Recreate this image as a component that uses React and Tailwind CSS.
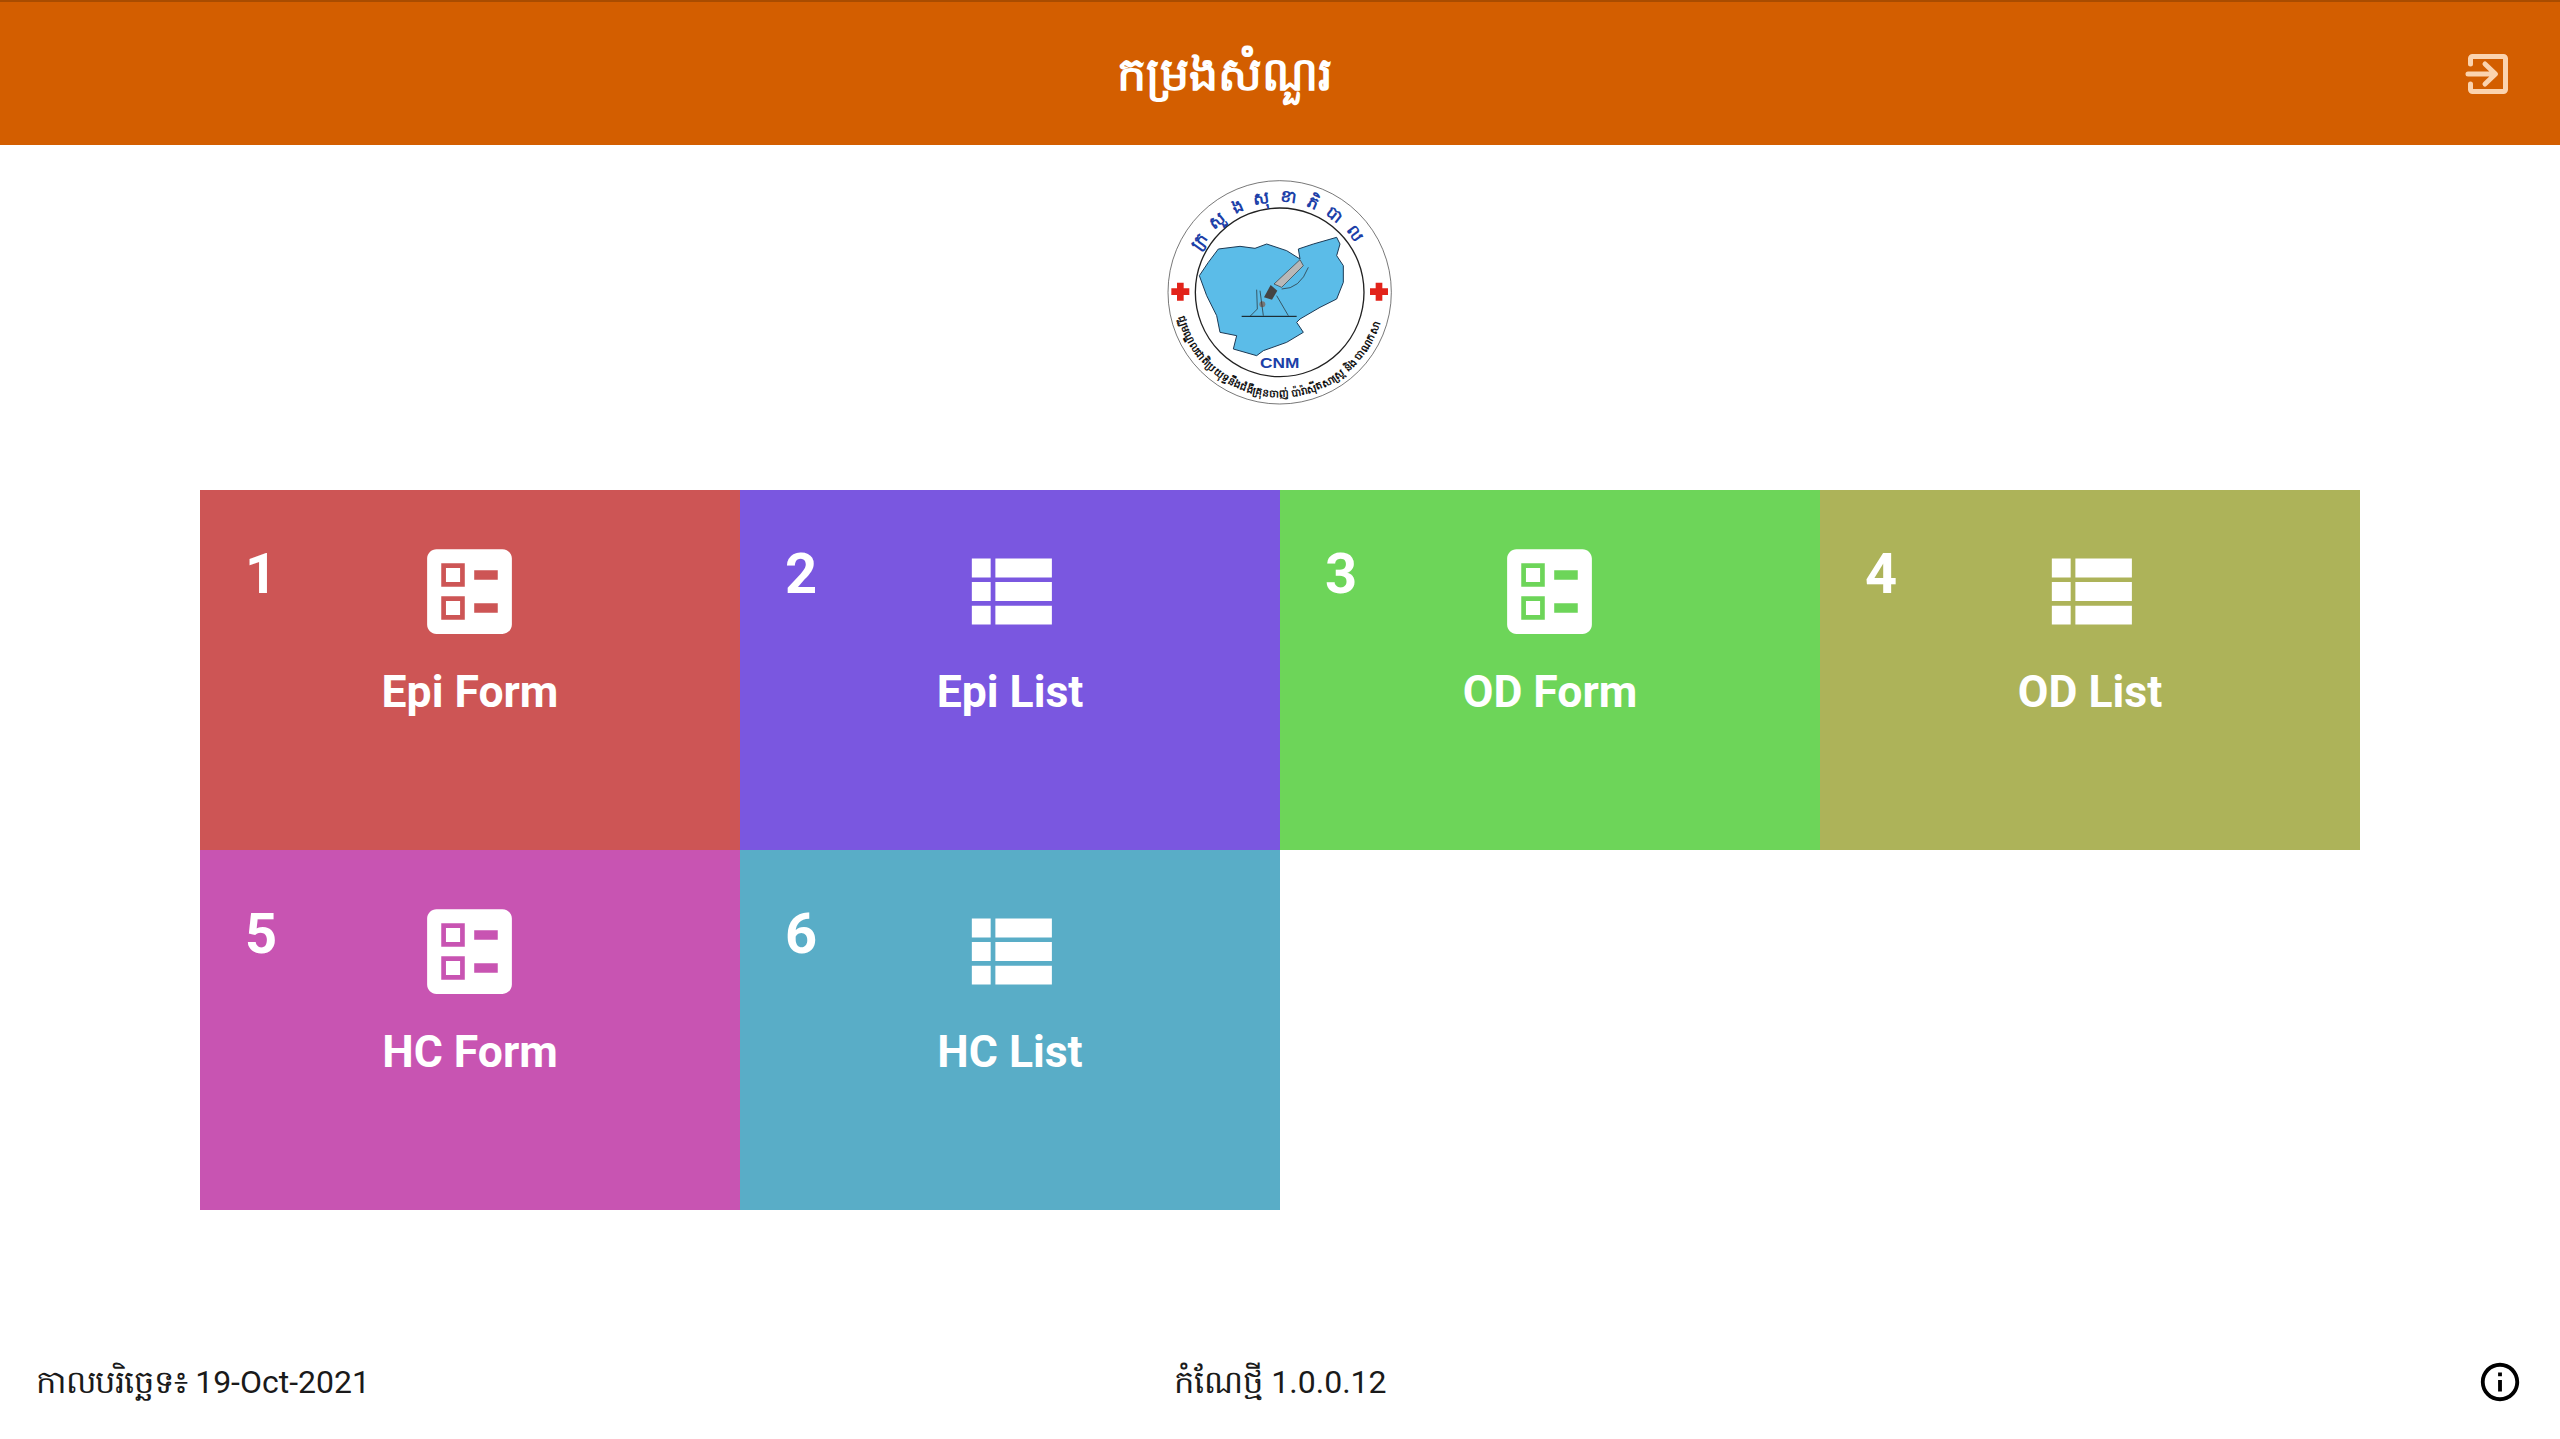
const cards = [
  { n: 1, label: "Epi Form", icon: "form", bg: "bg-[#cd5555]" },
  { n: 2, label: "Epi List", icon: "list", bg: "bg-[#7a57e0]" },
  { n: 3, label: "OD Form", icon: "form", bg: "bg-[#6dd559]" },
  { n: 4, label: "OD List", icon: "list", bg: "bg-[#adb359]" },
  { n: 5, label: "HC Form", icon: "form", bg: "bg-[#c854b2]" },
  { n: 6, label: "HC List", icon: "list", bg: "bg-[#59adc7]" },
];

function FormIcon() {
  return (
    <svg viewBox="0 0 24 24" className="w-[113px] h-[113px] -translate-x-[1px]" fill="#fff">
      <path fillRule="evenodd" d="M13 9.5h5v-2h-5v2zm0 7h5v-2h-5v2zm6 4.5H5c-1.1 0-2-.9-2-2V5c0-1.1.9-2 2-2h14c1.1 0 2 .9 2 2v14c0 1.1-.9 2-2 2zM6 11h5V6H6v5zm1-4h3v3H7V7zM6 18h5v-5H6v5zm1-4h3v3H7v-3z" />
    </svg>
  );
}

function ListIcon() {
  return (
    <svg viewBox="0 0 24 24" className="w-[113px] h-[113px] -translate-x-[1px]" fill="#fff">
      <path d="M4 14h4v-4H4v4zm0 5h4v-4H4v4zm0-10h4V5H4v4zm5 5h12v-4H9v4zm0 5h12v-4H9v4zM9 5v4h12V5H9z" />
    </svg>
  );
}

function ExitIcon() {
  return (
    <svg viewBox="0 0 46 46" className="w-[46px] h-[46px]" fill="none" stroke="#fbd3ae" strokeWidth="5" strokeLinecap="round" strokeLinejoin="round">
      <path d="M5.5 13V7.5a2 2 0 0 1 2-2h31a2 2 0 0 1 2 2v31a2 2 0 0 1-2 2h-31a2 2 0 0 1-2-2V33" />
      <path d="M3 23h26M20 13l10.5 10L20 33" />
    </svg>
  );
}

function InfoIcon() {
  return (
    <svg viewBox="0 0 24 24" className="w-[46px] h-[46px]" fill="#000">
      <path d="M11 7h2v2h-2zm0 4h2v6h-2zm1-9C6.48 2 2 6.48 2 12s4.48 10 10 10 10-4.48 10-10S17.52 2 12 2zm0 18c-4.41 0-8-3.59-8-8s3.59-8 8-8 8 3.59 8 8-3.59 8-8 8z" />
    </svg>
  );
}

function Logo() {
  return (
    <svg viewBox="0 0 840 750" className="w-[280px] h-[250px]">
      <defs>
        <path id="ringTop" d="M149 370 A270 270 0 0 1 689 370" />
        <path id="ringBottom" d="M115 452 A315 315 0 0 0 723 452" />
      </defs>
      <circle cx="419" cy="370" r="335" fill="#fff" stroke="#333" strokeWidth="2" />
      <circle cx="419" cy="370" r="253" fill="#fff" stroke="#222" strokeWidth="4" />
      <path
        d="M178 320 L205 280 L235 240 L300 232 L345 238 L380 225 L440 245 L480 270 L475 240 L520 225 L590 205 L600 225 L590 260 L610 290 L610 340 L590 390 L540 415 L480 450 L470 460 L490 490 L440 520 L370 545 L350 560 L280 540 L290 500 L240 490 L230 440 L200 380 Z"
        fill="#5bbce8"
        stroke="#1d3a55"
        strokeWidth="3"
      />
      <path d="M305 442 H470" stroke="#111" strokeWidth="3" />
      <path d="M402 345 L480 272 L490 290 L425 355 Z" fill="#b8b8b8" stroke="#333" strokeWidth="2" />
      <path d="M372 385 L392 348 L412 365 L396 392 Z" fill="#444" />
      <circle cx="367" cy="406" r="9" fill="#777" />
      <path d="M350 362 L352 420 L330 442 M360 365 L370 440 M410 380 L445 440 M425 360 Q480 360 505 295" fill="none" stroke="#222" strokeWidth="2" />
      <text x="419" y="597" textAnchor="middle" fontSize="44" fontWeight="700" textLength="118" lengthAdjust="spacingAndGlyphs" fontFamily="'Liberation Sans', sans-serif" fill="#1c3fa8">CNM</text>
      <path d="M94 358h17v-17h20v17h17v20h-17v17h-20v-17H94z" fill="#e2231a" />
      <path d="M690 358h17v-17h20v17h17v20h-17v17h-20v-17h-17z" fill="#e2231a" />
      <text fontSize="50" fontWeight="700" fill="#1c3fa8" letterSpacing="30" fontFamily="'Noto Sans', sans-serif">
        <textPath href="#ringTop" startOffset="50%" textAnchor="middle">ក្រសួងសុខាភិបាល</textPath>
      </text>
      <text fontSize="31" fontWeight="700" fill="#111" fontFamily="'Noto Sans', sans-serif">
        <textPath href="#ringBottom" startOffset="50%" textAnchor="middle">មជ្ឈមណ្ឌលជាតិប្រយុទ្ធនឹងជំងឺគ្រុនចាញ់ ប៉ារ៉ាស៊ីតសាស្ត្រ និង បាណកសាស្ត្រ</textPath>
      </text>
    </svg>
  );
}

function Card({ n, label, icon, bg }) {
  return (
    <div className={`relative h-[360px] flex flex-col items-center pt-[45px] text-white ${bg}`}>
      <span className="absolute left-[45px] top-[46px] text-[56px] leading-[76px] font-bold">{n}</span>
      {icon === "form" ? <FormIcon /> : <ListIcon />}
      <span className="mt-[16px] text-[44.5px] leading-[56px] font-bold">{label}</span>
    </div>
  );
}

export default function App() {
  return (
    <div className="h-[1439px] w-full flex flex-col bg-white font-['Roboto','Noto_Sans',sans-serif]">
      <header className="h-[145px] flex items-center bg-[#d35e00] border-t-2 border-[#a94c00]">
        <h1 className="flex-1 pt-[2px] text-center text-[46px] font-bold text-white">កម្រងសំណួរ</h1>
        <div className="w-[110px] pl-[15px]">
          <ExitIcon />
        </div>
      </header>

      <div className="flex justify-center mt-[24px] mb-[71px]">
        <Logo />
      </div>

      <div className="mx-[200px] grid grid-cols-4">
        {cards.map((c) => (
          <Card key={c.n} {...c} />
        ))}
      </div>

      <footer className="mt-auto mb-[29px] pl-[36px] pr-[35px] grid grid-cols-3 items-center text-[32px] leading-[56px] text-[#1a1a1a]">
        <span>
          <span className="tracking-[-0.4px]">កាលបរិច្ឆេទ៖</span> 19-Oct-2021
        </span>
        <span className="text-center">កំណែថ្មី 1.0.0.12</span>
        <div className="flex justify-end pr-[2px]">
          <InfoIcon />
        </div>
      </footer>
    </div>
  );
}
